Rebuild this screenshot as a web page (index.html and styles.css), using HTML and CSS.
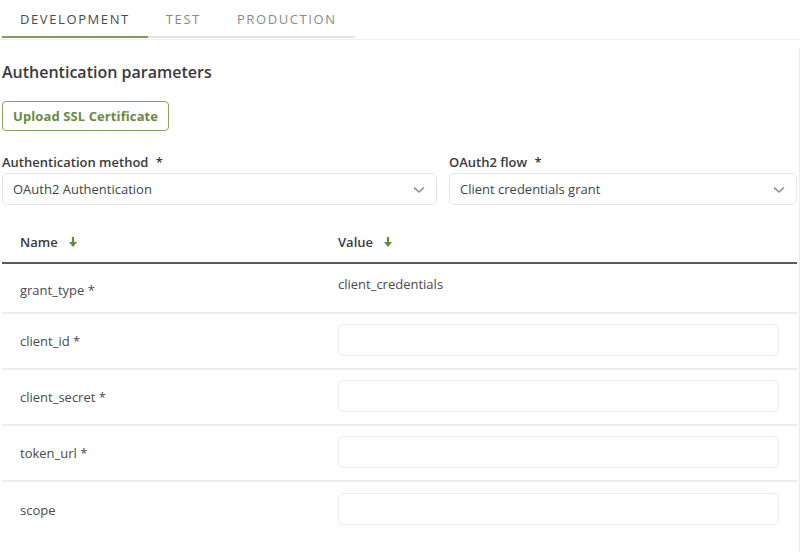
FILE: index.html
```html
<!DOCTYPE html>
<html>
<head>
<meta charset="utf-8">
<link rel="stylesheet" href="styles.css">
</head>
<body>
<div class="tabbar">
  <div class="tabs">
    <div class="tab active">DEVELOPMENT</div>
    <div class="tab">TEST</div>
    <div class="tab">PRODUCTION</div>
  </div>
</div>
<div class="panel">
  <h2 class="heading">Authentication parameters</h2>
  <button class="btn">Upload SSL Certificate</button>
  <div class="fields">
    <div class="field">
      <label class="label">Authentication method <span class="req">*</span></label>
      <div class="select">
        <span>OAuth2 Authentication</span>
        <svg class="chev" width="12" height="8" viewBox="0 0 12 8"><path d="M1 1.5 L6 6 L11 1.5" fill="none" stroke="#8a8a8a" stroke-width="1.6"/></svg>
      </div>
    </div>
    <div class="field">
      <label class="label">OAuth2 flow <span class="req">*</span></label>
      <div class="select">
        <span>Client credentials grant</span>
        <svg class="chev" width="12" height="8" viewBox="0 0 12 8"><path d="M1 1.5 L6 6 L11 1.5" fill="none" stroke="#8a8a8a" stroke-width="1.6"/></svg>
      </div>
    </div>
  </div>
  <div class="table">
    <div class="thead">
      <div class="th name-col">Name <svg class="arrow" width="10" height="12" viewBox="0 0 10 12"><path d="M5 1 V9" stroke="#5f8f28" stroke-width="2.2"/><path d="M1 6 L5 11 L9 6 Z" fill="#5f8f28"/></svg></div>
      <div class="th value-col">Value <svg class="arrow" width="10" height="12" viewBox="0 0 10 12"><path d="M5 1 V9" stroke="#5f8f28" stroke-width="2.2"/><path d="M1 6 L5 11 L9 6 Z" fill="#5f8f28"/></svg></div>
    </div>
    <div class="row first">
      <div class="td name-col grant">grant_type *</div>
      <div class="td value-col static">client_credentials</div>
    </div>
    <div class="row">
      <div class="td name-col">client_id *</div>
      <div class="td value-col"><div class="input"></div></div>
    </div>
    <div class="row">
      <div class="td name-col">client_secret *</div>
      <div class="td value-col"><div class="input"></div></div>
    </div>
    <div class="row">
      <div class="td name-col">token_url *</div>
      <div class="td value-col"><div class="input"></div></div>
    </div>
    <div class="row last">
      <div class="td name-col">scope</div>
      <div class="td value-col"><div class="input"></div></div>
    </div>
  </div>
</div>
</body>
</html>
```

FILE: styles.css
```css
* { box-sizing: border-box; }
html, body { margin: 0; padding: 0; background: #fff; }
body {
  font-family: "Open Sans", "Noto Sans", sans-serif;
  font-size: 13px;
  color: #444;
  width: 800px;
  height: 552px;
  overflow: hidden;
}
.tabbar {
  border-bottom: 1px solid #eeeeee;
  padding-left: 2px;
  height: 40px;
}
.tabs {
  display: flex;
  width: max-content;
  border-bottom: 2px solid #e2e2e2;
}
.tab {
  height: 38px;
  padding: 2px 18px 0;
  display: flex;
  align-items: center;
  font-size: 13px;
  letter-spacing: 1.6px;
  color: #8a8a8a;
  margin-bottom: -2px;
  border-bottom: 2px solid transparent;
}
.tab.active {
  color: #4a4a4a;
  border-bottom-color: #7f9f55;
}
.panel {
  margin-top: 8px;
  padding: 12px 2px 16px 2px;
  border-right: 1px solid #ededed;
  width: 800px;
}
.heading {
  margin: 0;
  font-size: 16px;
  font-weight: 600;
  color: #3a3a3a;
  line-height: 24px;
}
.btn {
  margin-top: 17px;
  height: 30px;
  padding: 0 10px;
  font-family: inherit;
  font-size: 13px;
  font-weight: 700;
  letter-spacing: 0.1px;
  color: #6b8a3e;
  background: #fff;
  border: 1.5px solid #86a35c;
  border-radius: 4px;
  display: block;
}
.fields {
  margin-top: 22px;
  display: grid;
  grid-template-columns: 435px 348px;
  column-gap: 12px;
}
.label {
  display: block;
  font-weight: 600;
  color: #3a3a3a;
  line-height: 18px;
  height: 20px;
}
.req { margin-left: 4px; }
.select {
  height: 32px;
  border: 1px solid #e6e6e6;
  border-radius: 5px;
  padding: 0 11px 0 10px;
  display: flex;
  align-items: center;
  justify-content: space-between;
  color: #444;
}
.chev { margin-top: 1px; }
.table {
  margin-top: 16px;
  width: 795px;
}
.thead {
  display: flex;
  height: 43px;
  border-bottom: 2px solid #5a5a5a;
  align-items: center;
}
.th {
  font-weight: 600;
  color: #3a3a3a;
  display: flex;
  align-items: center;
}
.arrow { margin-left: 10px; }
.name-col { width: 318px; padding-left: 18px; flex: none; }
.value-col { flex: 1; padding-left: 18px; padding-right: 18px; }
.row {
  display: flex;
  align-items: center;
  height: 56px;
  border-bottom: 2px solid #ececec;
}
.row.first { height: 50px; align-items: stretch; }
.row.first .grant { padding-top: 17px; }
.row.first .static { padding-top: 11px; }
.row.last { border-bottom: none; }
.td { color: #4a4a4a; }
.input {
  height: 32px;
  margin-bottom: 3px;
  border: 1.5px solid #ececec;
  border-radius: 5px;
}
```
